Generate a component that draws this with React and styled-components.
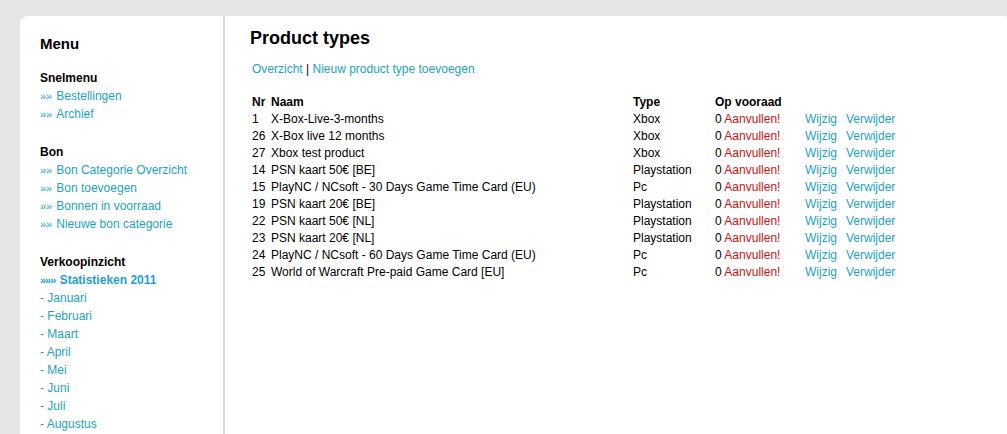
import React from "react";
import styled, { createGlobalStyle } from "styled-components";

const GlobalStyle = createGlobalStyle`
  html, body {
    margin: 0;
    padding: 0;
    background: #e6e6e6;
    font-family: "Liberation Sans", Arial, sans-serif;
    font-size: 12px;
    color: #000;
  }
`;

const Page = styled.div`
  padding: 16px 0 0 20px;
  height: 434px;
  box-sizing: border-box;
  overflow: hidden;
`;

const Panel = styled.div`
  display: flex;
  background: #fff;
  border-radius: 8px 8px 0 0;
  min-height: 420px;
  margin-right: -4px;
`;

const Sidebar = styled.div`
  width: 183px;
  padding: 19px 0 0 20px;
  border-right: 2px solid #dcdcdc;
  flex-shrink: 0;
`;

const MenuTitle = styled.div`
  font-size: 15px;
  font-weight: bold;
  line-height: 18px;
  margin-bottom: 16px;
`;

const Group = styled.div`
  margin-bottom: 20px;
`;

const GroupTitle = styled.div`
  font-weight: bold;
  line-height: 18px;
  height: 18px;
`;

const SideLink = styled.a`
  display: block;
  line-height: 18px;
  height: 18px;
  color: ${({ $active }) => ($active ? "#1ea0d2" : "#23a2c0")};
  font-weight: ${({ $active }) => ($active ? "bold" : "normal")};
  text-decoration: none;
  cursor: pointer;
`;

const Arrows = styled.span`
  font-size: 11px;
  line-height: 0;
  margin-right: ${({ $tight }) => ($tight ? "1px" : "4px")};
  letter-spacing: ${({ $tight }) => ($tight ? "-1px" : "0")};
`;

const Main = styled.div`
  flex: 1;
  padding: 11px 0 0 25px;
`;

const Title = styled.h1`
  margin: 0;
  font-size: 18px;
  font-weight: bold;
  line-height: 22px;
`;

const SubNav = styled.div`
  margin: 12px 0 0 2px;
  line-height: 16px;
`;

const NavLink = styled.a`
  color: #23a2c0;
  text-decoration: none;
  cursor: pointer;
`;

const Table = styled.table`
  margin-top: 16px;
  border-collapse: collapse;
`;

const Th = styled.th`
  text-align: left;
  font-weight: bold;
  padding: 0 2px;
  height: 17px;
  width: ${({ $w }) => $w || "auto"};
  box-sizing: border-box;
`;

const Td = styled.td`
  padding: 0 2px;
  height: 17px;
  white-space: nowrap;
`;

const Warn = styled.span`
  color: #cc1111;
`;

const RowLink = styled.a`
  color: #23a2c0;
  text-decoration: none;
  cursor: pointer;
`;

const products = [
  [1, "X-Box-Live-3-months", "Xbox"],
  [26, "X-Box live 12 months", "Xbox"],
  [27, "Xbox test product", "Xbox"],
  [14, "PSN kaart 50€ [BE]", "Playstation"],
  [15, "PlayNC / NCsoft - 30 Days Game Time Card (EU)", "Pc"],
  [19, "PSN kaart 20€ [BE]", "Playstation"],
  [22, "PSN kaart 50€ [NL]", "Playstation"],
  [23, "PSN kaart 20€ [NL]", "Playstation"],
  [24, "PlayNC / NCsoft - 60 Days Game Time Card (EU)", "Pc"],
  [25, "World of Warcraft Pre-paid Game Card [EU]", "Pc"],
];

const months = ["Januari", "Februari", "Maart", "April", "Mei", "Juni", "Juli", "Augustus"];

export default function App() {
  return (
    <>
      <GlobalStyle />
      <Page>
        <Panel>
          <Sidebar>
            <MenuTitle>Menu</MenuTitle>
            <Group>
              <GroupTitle>Snelmenu</GroupTitle>
              <SideLink><Arrows>»»</Arrows>Bestellingen</SideLink>
              <SideLink><Arrows>»»</Arrows>Archief</SideLink>
            </Group>
            <Group>
              <GroupTitle>Bon</GroupTitle>
              <SideLink><Arrows>»»</Arrows>Bon Categorie Overzicht</SideLink>
              <SideLink><Arrows>»»</Arrows>Bon toevoegen</SideLink>
              <SideLink><Arrows>»»</Arrows>Bonnen in voorraad</SideLink>
              <SideLink><Arrows>»»</Arrows>Nieuwe bon categorie</SideLink>
            </Group>
            <Group>
              <GroupTitle>Verkoopinzicht</GroupTitle>
              <SideLink $active><Arrows $tight>»»»</Arrows> Statistieken 2011</SideLink>
              {months.map((m) => (
                <SideLink key={m}>- {m}</SideLink>
              ))}
            </Group>
          </Sidebar>
          <Main>
            <Title>Product types</Title>
            <SubNav>
              <NavLink>Overzicht</NavLink> | <NavLink>Nieuw product type toevoegen</NavLink>
            </SubNav>
            <Table>
              <thead>
                <tr>
                  <Th $w="19px">Nr</Th>
                  <Th $w="362px">Naam</Th>
                  <Th $w="82px">Type</Th>
                  <Th $w="90px">Op vooraad</Th>
                  <Th $w="41px"></Th>
                  <Th></Th>
                </tr>
              </thead>
              <tbody>
                {products.map(([nr, naam, type]) => (
                  <tr key={nr}>
                    <Td>{nr}</Td>
                    <Td>{naam}</Td>
                    <Td>{type}</Td>
                    <Td>0 <Warn>Aanvullen!</Warn></Td>
                    <Td><RowLink>Wijzig</RowLink></Td>
                    <Td><RowLink>Verwijder</RowLink></Td>
                  </tr>
                ))}
              </tbody>
            </Table>
          </Main>
        </Panel>
      </Page>
    </>
  );
}
